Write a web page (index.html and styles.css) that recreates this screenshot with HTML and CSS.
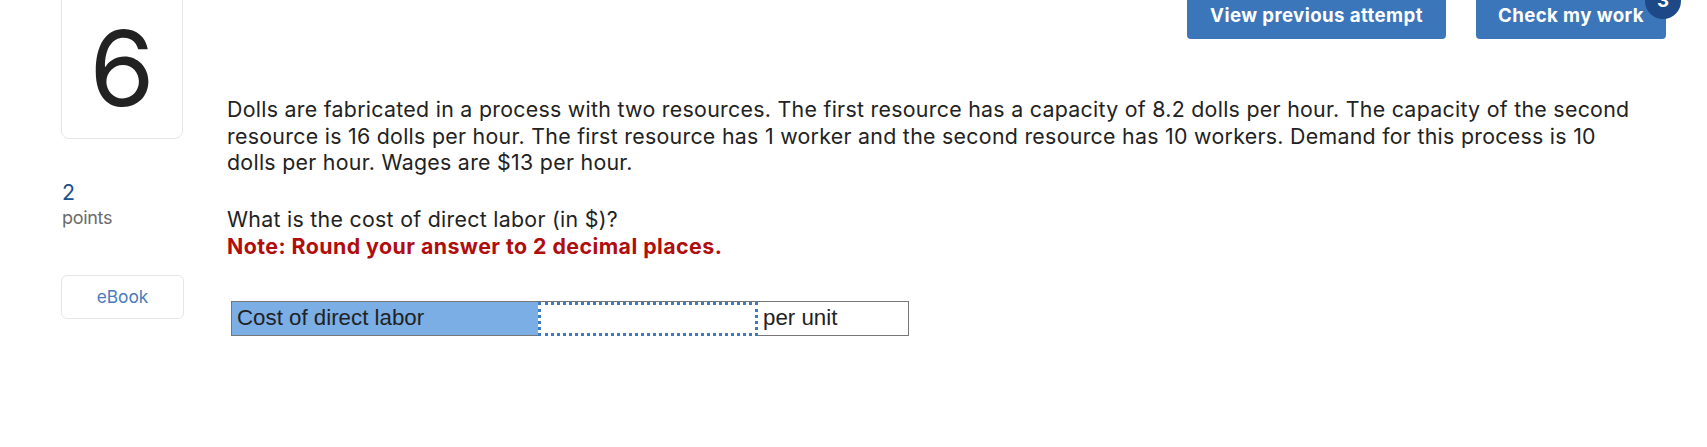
FILE: index.html
```html
<!DOCTYPE html>
<html lang="en">
<head>
<meta charset="utf-8">
<title>Question 6</title>
<link rel="stylesheet" href="styles.css">
</head>
<body>
<div class="page">
  <aside class="side">
    <div class="qnum">6</div>
    <div class="pts-num">2</div>
    <div class="pts-label">points</div>
    <div class="ebook">eBook</div>
  </aside>
  <main class="main">
    <div class="toolbar">
      <div class="btn btn-prev">View previous attempt</div>
      <div class="btn btn-check">Check my work<span class="badge">3</span></div>
    </div>
    <p class="question">Dolls are fabricated in a process with two resources. The first resource has a capacity of 8.2 dolls per hour. The capacity of the second resource is 16 dolls per hour. The first resource has 1 worker and the second resource has 10 workers. Demand for this process is 10 dolls per hour. Wages are $13 per hour.</p>
    <p class="ask">What is the cost of direct labor (in $)?</p>
    <p class="note">Note: Round your answer to 2 decimal places.</p>
    <div class="answer">
      <div class="cell-label">Cost of direct labor</div>
      <div class="cell-input"></div>
      <div class="cell-unit">per unit</div>
    </div>
  </main>
</div>
</body>
</html>
```
FILE: styles.css
```css
html, body { margin: 0; padding: 0; background: #fff; }
body { font-family: Inter, "Noto Sans", sans-serif; color: #222; overflow: hidden; }

.page { display: flex; padding-left: 61px; padding-right: 41px; }

.side { width: 123px; flex: none; }
.qnum {
  width: 122px; height: 153px; box-sizing: border-box;
  margin-top: -14px;
  border: 1px solid #e6e6e6; border-radius: 8px;
  padding-top: 28px;
  text-align: center;
  font-size: 105px; line-height: 105px; font-weight: 400; color: #222;
}
.pts-num { margin-top: 40px; font-size: 21.33px; line-height: 26.67px; color: #1c4f8f; padding-left: 1px; }
.pts-label { font-size: 18px; line-height: 23px; color: #6b6b6b; padding-left: 1px; letter-spacing: -0.3px; }
.ebook {
  margin-top: 46px; height: 44px; box-sizing: border-box;
  border: 1px solid #e6e6e6; border-radius: 6px;
  text-align: center; font-size: 17.33px; line-height: 42px; color: #4a7bbb;
}

.main { flex: 1; margin-left: 43px; min-width: 0; }
.toolbar { display: flex; justify-content: flex-end; gap: 30px; }
.btn {
  position: relative; height: 39px; box-sizing: border-box;
  background: #3b76ba; color: #fff; border-radius: 0 0 4px 4px;
  font-weight: 700; font-size: 18.67px; line-height: 32px; letter-spacing: 0.4px;
  text-align: center; white-space: nowrap;
}
.btn-prev { width: 259px; }
.btn-check { width: 190px; }
.badge {
  position: absolute; left: 169px; top: -17px;
  width: 36px; height: 36px; border-radius: 50%;
  background: #1d4a86; color: #fff;
  font-size: 18.67px; line-height: 36px; text-align: center; letter-spacing: 0;
}

.question, .ask, .note {
  margin: 0; font-size: 21.33px; line-height: 26.67px; letter-spacing: 0.29px; color: #222;
}
.question { margin-top: 57px; padding-right: 30px; }
.ask { margin-top: 30px; }
.note { font-weight: 700; color: #b00d0d; letter-spacing: 0.45px; }

.answer {
  display: flex; margin: 42px 0 0 4px; width: 678px; height: 35px; box-sizing: border-box;
  border: 1px solid #777;
  font-family: "Liberation Sans", Arial, sans-serif; font-size: 22.3px; line-height: 32px; color: #222;
}
.cell-label { width: 306px; flex: none; background: #7aaee5; padding-left: 5px; box-sizing: border-box; }
.cell-input {
  width: 220px; height: 34px; flex: none; box-sizing: border-box;
  border: 3px dotted #3d7ac4; background: #fff;
}
.cell-unit { flex: 1; padding-left: 5px; }
```
